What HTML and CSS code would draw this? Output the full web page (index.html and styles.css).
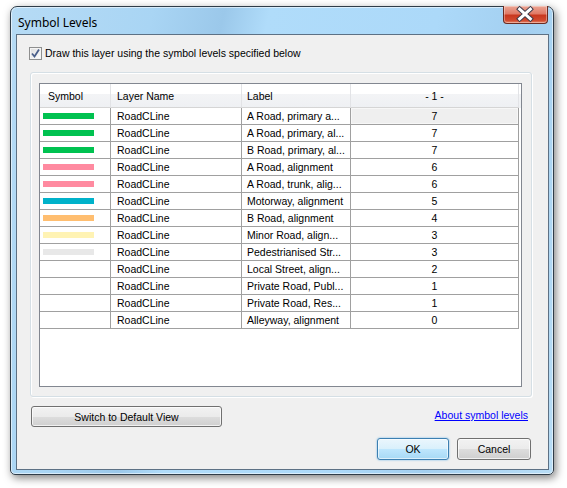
FILE: index.html
```html
<!DOCTYPE html>
<html>
<head>
<meta charset="utf-8">
<link rel="stylesheet" href="styles.css">
</head>
<body>
<div class="window">
  <div class="titlebar">
    <span class="title">Symbol Levels</span>
    <div class="close">
      <svg width="45" height="18" viewBox="0 0 45 18">
        <path d="M17 4 L28 14 M28 4 L17 14" stroke="#3a3a4a" stroke-width="5" stroke-linecap="square"/>
        <path d="M17 4 L28 14 M28 4 L17 14" stroke="#ffffff" stroke-width="3" stroke-linecap="square"/>
      </svg>
    </div>
  </div>
  <div class="client">
    <label class="check-row">
      <span class="checkbox">
        <svg width="13" height="13" viewBox="0 0 13 13">
          <path d="M3 6.5 L5.5 9.5 L10 2.5" fill="none" stroke="#4a5f8a" stroke-width="1.8"/>
        </svg>
      </span>
      <span class="check-label">Draw this layer using the symbol levels specified below</span>
    </label>
    <div class="group">
      <div class="table">
        <div class="row head">
          <div class="cell c1">Symbol</div>
          <div class="cell c2">Layer Name</div>
          <div class="cell c3">Label</div>
          <div class="cell c4">- 1 -</div>
        </div>
        <div class="row"><div class="cell c1"><span class="bar green"></span></div><div class="cell c2">RoadCLine</div><div class="cell c3">A Road, primary a...</div><div class="cell c4 sel">7</div></div>
        <div class="row"><div class="cell c1"><span class="bar green"></span></div><div class="cell c2">RoadCLine</div><div class="cell c3">A Road, primary, al...</div><div class="cell c4">7</div></div>
        <div class="row"><div class="cell c1"><span class="bar green"></span></div><div class="cell c2">RoadCLine</div><div class="cell c3">B Road, primary, al...</div><div class="cell c4">7</div></div>
        <div class="row"><div class="cell c1"><span class="bar pink"></span></div><div class="cell c2">RoadCLine</div><div class="cell c3">A Road, alignment</div><div class="cell c4">6</div></div>
        <div class="row"><div class="cell c1"><span class="bar pink"></span></div><div class="cell c2">RoadCLine</div><div class="cell c3">A Road, trunk, alig...</div><div class="cell c4">6</div></div>
        <div class="row"><div class="cell c1"><span class="bar cyan"></span></div><div class="cell c2">RoadCLine</div><div class="cell c3">Motorway, alignment</div><div class="cell c4">5</div></div>
        <div class="row"><div class="cell c1"><span class="bar orange"></span></div><div class="cell c2">RoadCLine</div><div class="cell c3">B Road, alignment</div><div class="cell c4">4</div></div>
        <div class="row"><div class="cell c1"><span class="bar yellow"></span></div><div class="cell c2">RoadCLine</div><div class="cell c3">Minor Road, align...</div><div class="cell c4">3</div></div>
        <div class="row"><div class="cell c1"><span class="bar grey"></span></div><div class="cell c2">RoadCLine</div><div class="cell c3">Pedestrianised Str...</div><div class="cell c4">3</div></div>
        <div class="row"><div class="cell c1"></div><div class="cell c2">RoadCLine</div><div class="cell c3">Local Street, align...</div><div class="cell c4">2</div></div>
        <div class="row"><div class="cell c1"></div><div class="cell c2">RoadCLine</div><div class="cell c3">Private Road, Publ...</div><div class="cell c4">1</div></div>
        <div class="row"><div class="cell c1"></div><div class="cell c2">RoadCLine</div><div class="cell c3">Private Road, Res...</div><div class="cell c4">1</div></div>
        <div class="row"><div class="cell c1"></div><div class="cell c2">RoadCLine</div><div class="cell c3">Alleyway, alignment</div><div class="cell c4">0</div></div>
      </div>
    </div>
    <div class="mid-row">
      <button class="btn switch">Switch to Default View</button>
      <a class="link" href="#">About symbol levels</a>
    </div>
    <div class="foot-row">
      <button class="btn ok">OK</button>
      <button class="btn cancel">Cancel</button>
    </div>
  </div>
</div>
</body>
</html>
```

FILE: styles.css
```css
* { box-sizing: border-box; }
html, body { margin: 0; padding: 0; background: #ffffff; }
body {
  width: 567px;
  height: 488px;
  overflow: hidden;
  font-family: "Liberation Sans", Arial, sans-serif;
  font-size: 10.5px;
  color: #000;
  padding: 6px 0 0 10px;
}
.window {
  width: 544px;
  height: 469px;
  border: 1px solid #2f3c48;
  border-radius: 7px 7px 5px 5px;
  background: linear-gradient(103deg, #b6dbf5 0%, #a9d5f4 22%, #9bc8ea 33%, #b0dcfa 40%, #acd9f9 66%, #a3cff0 80%, #b8ddf6 100%);
  box-shadow: inset 0 0 0 1px rgba(255,255,255,0.55), 2px 3px 9px rgba(0,0,0,0.5);
  display: flex;
  flex-direction: column;
}
.titlebar {
  height: 27px;
  display: flex;
  justify-content: space-between;
  align-items: flex-start;
  padding-left: 7px;
  padding-right: 5px;
}
.title {
  font-family: "Noto Sans", "Liberation Sans", sans-serif;
  font-size: 12px;
  line-height: 14px;
  margin-top: 9px;
  color: #000;
}
.close {
  width: 45px;
  height: 18px;
  margin-top: -1px;
  border: 1px solid #6b2a20;
  border-top: none;
  border-radius: 0 0 4px 4px;
  background: linear-gradient(#eba594 0%, #e07a66 45%, #c9381f 55%, #d04a2f 85%, #e8866a 100%);
  box-shadow: inset 0 0 0 1px rgba(255,255,255,0.35);
  display: flex;
}
.close svg { display: block; margin: -1px 0 0 -1px; }
.client {
  margin: 0 4px 0 5px;
  height: 436px;
  border: 1px solid #5d7185;
  background: #f0f0f0;
  display: flex;
  flex-direction: column;
  font-size: 10.5px;
}
.check-row {
  display: flex;
  align-items: center;
  margin: 12px 0 0 12px;
  height: 13px;
}
.checkbox {
  width: 13px;
  height: 13px;
  border: 1px solid #8e8f8f;
  background: linear-gradient(135deg, #dcdcdc, #ffffff);
  box-shadow: inset 0 0 0 1px #f4f4f4;
  display: flex;
}
.checkbox svg { display: block; margin: -1px; }
.check-label { margin-left: 3px; line-height: 13px; }
.group {
  margin: 12px 0 0 13px;
  width: 502px;
  height: 325px;
  border: 1px solid #d5dfe5;
  border-radius: 3px;
  box-shadow: inset 1px 1px 0 #ffffff, 1px 1px 0 #ffffff;
}
.table {
  margin: 10px 0 0 8px;
  width: 483px;
  height: 304px;
  border: 1px solid #828790;
  background: #ffffff;
}
.row {
  display: grid;
  grid-template-columns: 71px 131px 109px 168px;
  height: 17px;
}
.cell {
  border-right: 1px solid #a0a0a0;
  border-bottom: 1px solid #a0a0a0;
  line-height: 17px;
  white-space: nowrap;
  overflow: hidden;
}
.row.head {
  height: 24px;
  background: linear-gradient(#ffffff 0%, #ffffff 40%, #f3f4f6 41%, #eef0f3 100%);
}
.row.head .cell {
  border-right: 1px solid #e2e3e6;
  border-bottom: 1px solid #d5d5d5;
  line-height: 24px;
}
.c1 { padding-left: 2px; display: flex; align-items: center; }
.row.head .c1 { padding-left: 8px; display: block; }
.c2 { padding-left: 6px; }
.c3 { padding-left: 5px; }
.c4 { text-align: center; }
.sel { background: #efefef; box-shadow: inset 0 0 0 1px #f7f7f7; }
.bar { display: block; width: 51px; height: 6px; margin-left: 1px; }
.green { background: #00c250; }
.pink { background: #ff8aa0; }
.cyan { background: #00b2ca; }
.orange { background: #ffbe70; }
.yellow { background: #fff3b4; }
.grey { background: #e8e8e8; }
.btn {
  font-family: "Liberation Sans", Arial, sans-serif;
  font-size: 10.5px;
  color: #000;
  padding: 0;
  border: 1px solid #707070;
  border-radius: 3px;
  background: linear-gradient(#f2f2f2 0%, #ebebeb 50%, #dddddd 51%, #cfcfcf 100%);
  box-shadow: inset 0 0 0 1px rgba(255,255,255,0.7);
}
.mid-row {
  display: flex;
  justify-content: space-between;
  align-items: flex-start;
  margin: 9px 20px 0 14px;
}
.switch { width: 191px; height: 21px; }
.link {
  color: #0000ff;
  text-decoration: underline;
  margin-top: 3px;
  line-height: 13px;
}
.foot-row {
  display: flex;
  justify-content: flex-end;
  gap: 8px;
  margin: 11px 17px 0 0;
}
.ok, .cancel { height: 22px; }
.ok {
  width: 72px;
  border-color: #3c7fb1;
  background: linear-gradient(#eaf6fd 0%, #d9f0fc 50%, #bee6fd 51%, #a7d9f5 100%);
  box-shadow: inset 0 0 0 1px rgba(255,255,255,0.6), 0 0 2px #5fb0e6;
}
.cancel { width: 74px; }
```
